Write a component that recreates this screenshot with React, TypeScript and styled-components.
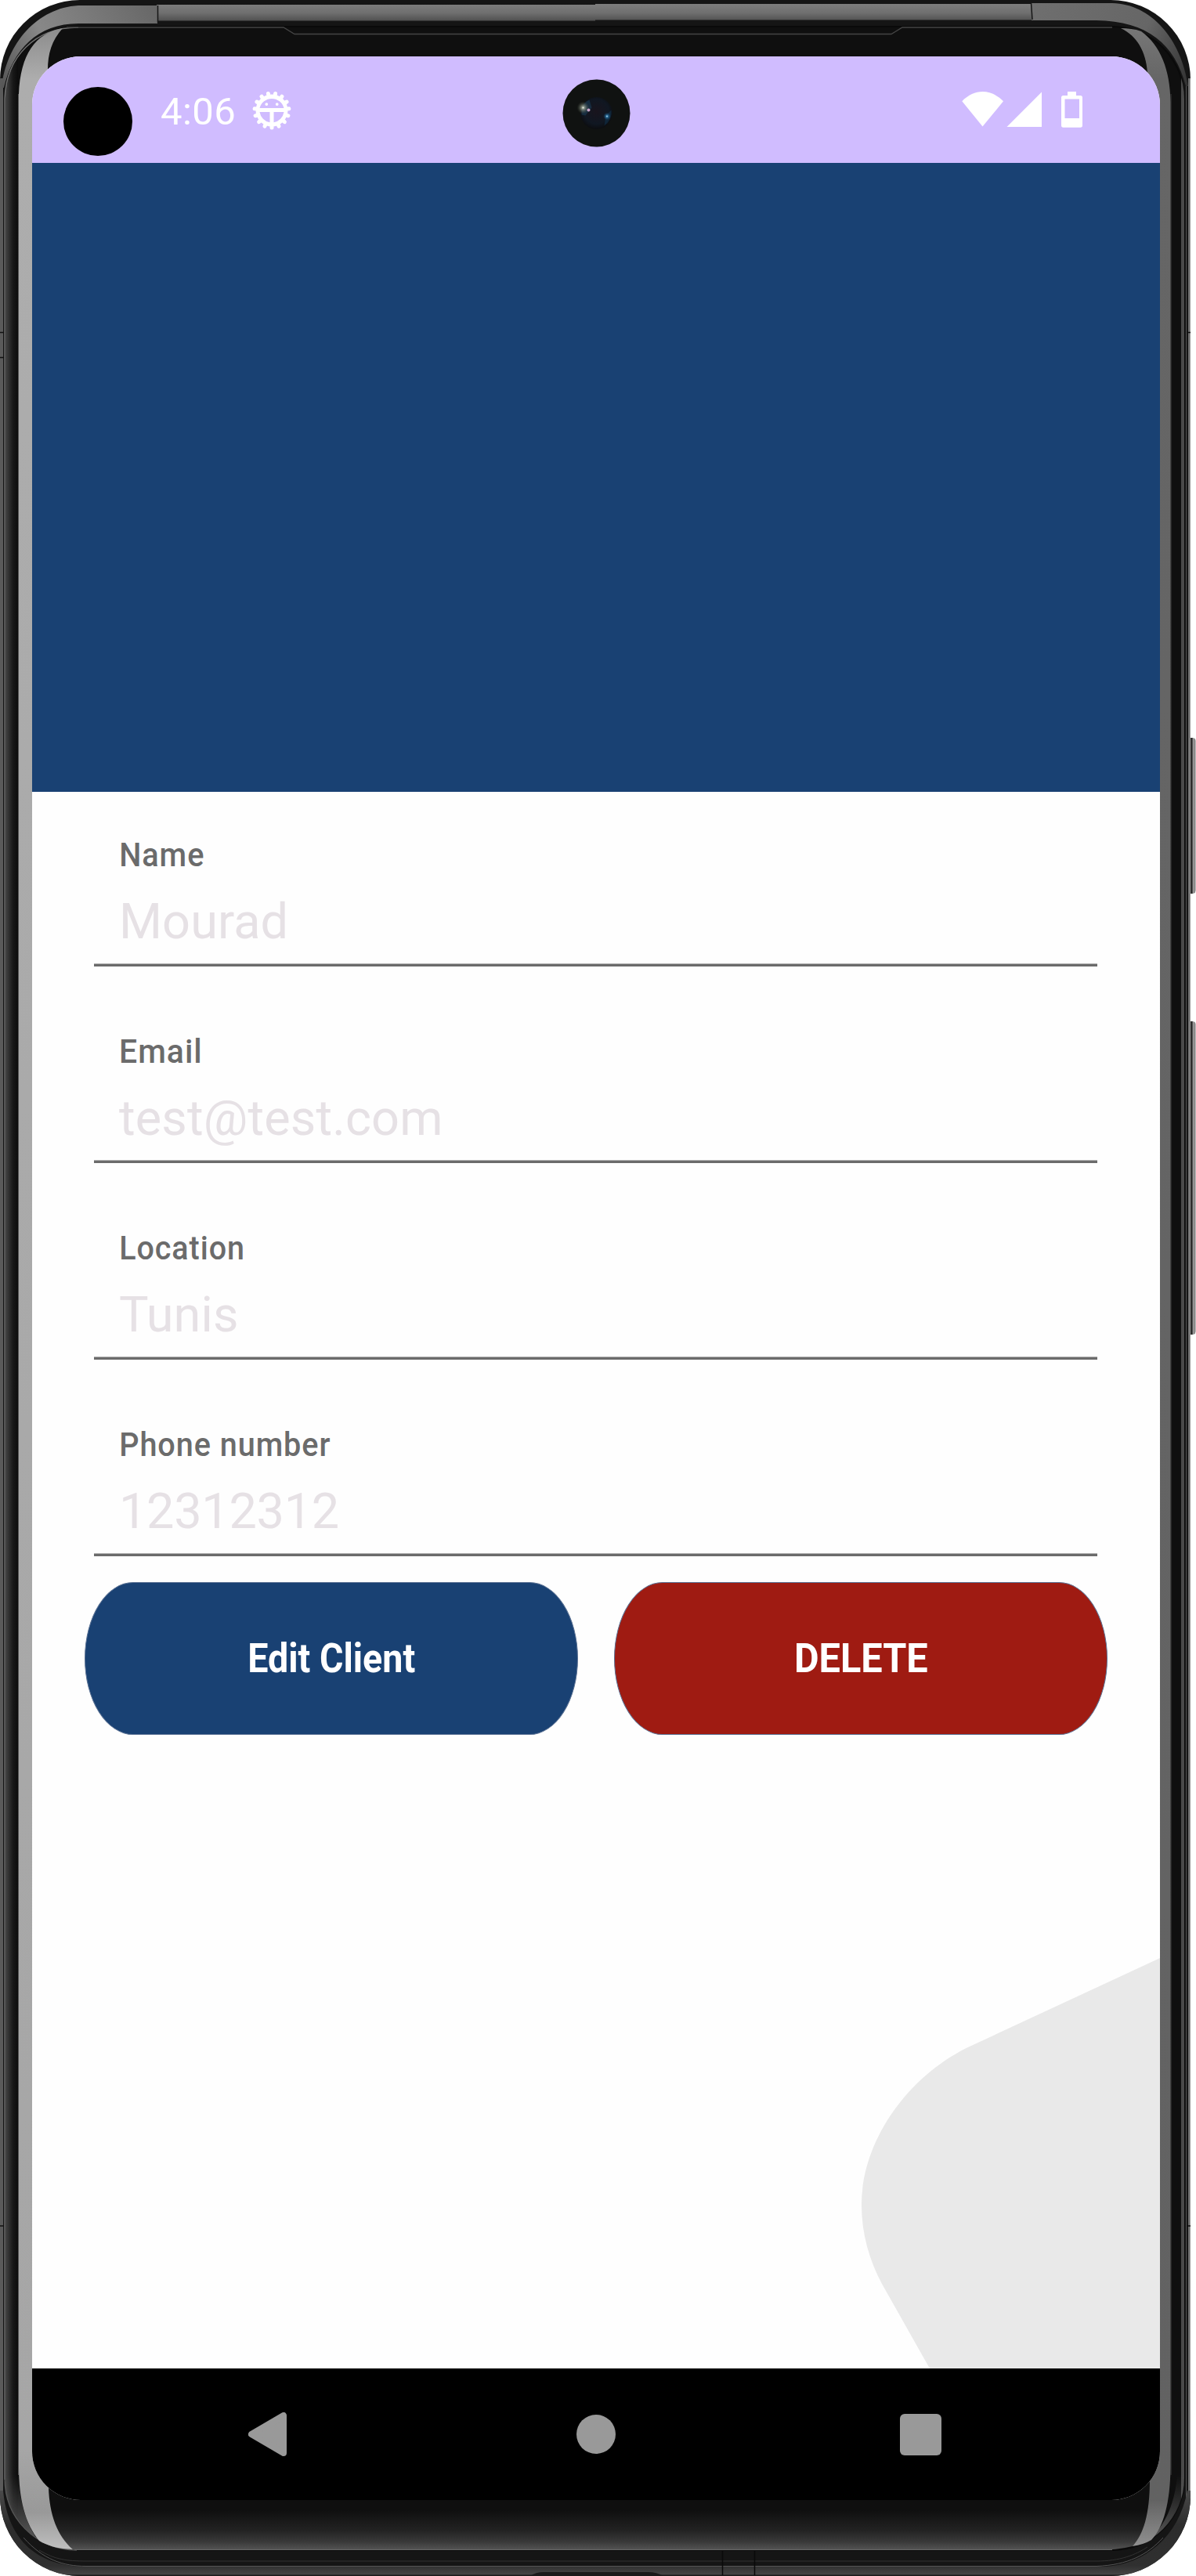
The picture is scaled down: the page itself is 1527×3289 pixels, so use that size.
import React from "react";
import styled, { createGlobalStyle } from "styled-components";

const GlobalStyle = createGlobalStyle`
  *, *::before, *::after { box-sizing: border-box; }
  html, body { margin: 0; padding: 0; background: #fff; }
  body { font-family: Roboto, "Liberation Sans", sans-serif; }
`;

const Device = styled.div`
  position: relative;
  width: 1527px;
  height: 3289px;
  padding: 72px 46px 97px 41px;
  overflow: hidden;
`;

const FrameArt = styled.svg`
  position: absolute;
  inset: 0;
  display: block;
`;

const Screen = styled.main`
  position: relative;
  display: flex;
  flex-direction: column;
  width: 1440px;
  height: 3120px;
  border-radius: 62px;
  overflow: hidden;
  background: #fefefe;
`;

const StatusBar = styled.header`
  display: flex;
  align-items: center;
  flex: none;
  height: 136px;
  padding: 0 98px 0 40px;
  background: #d0bcff;
`;

const Cutout = styled.div`
  width: 88px;
  height: 88px;
  margin-top: 30px;
  border-radius: 50%;
  background: #000;
`;

const Clock = styled.span`
  margin: 5px 0 0 36px;
  width: 96px;
  font-size: 49px;
  line-height: 58px;
  letter-spacing: 0.4px;
  color: #fff;
  white-space: nowrap;
`;

const DebugIcon = styled.svg`
  width: 50px;
  height: 50px;
  margin: 1px 0 0 20.5px;
`;

const SignalIcons = styled.svg`
  margin-left: auto;
  width: 155px;
  height: 48px;
`;

const Camera = styled.svg`
  position: absolute;
  left: 677px;
  top: 29px;
  width: 87px;
  height: 87px;
`;

const Banner = styled.section`
  flex: none;
  height: 803px;
  background: #194173;
`;

const Body = styled.section`
  position: relative;
  flex: 1;
`;

const Blob = styled.svg`
  position: absolute;
  right: 0;
  bottom: 0;
  width: 381px;
  height: 524px;
`;

const Form = styled.form`
  display: flex;
  flex-direction: column;
`;

const Field = styled.div`
  display: flex;
  flex-direction: column;
  height: 251px;
  padding: 56px 80px 0 79px;
`;

const Label = styled.span<{ $squeeze: number }>`
  align-self: flex-start;
  margin-left: 32px;
  font-size: 42px;
  line-height: 50px;
  font-weight: 500;
  color: #6b6b6b;
  letter-spacing: 1px;
  white-space: nowrap;
  transform: scaleX(${(p) => p.$squeeze});
  transform-origin: 3px 0;
`;

const Value = styled.span<{ $spacing: number }>`
  margin: 23px 0 16px 32px;
  font-size: 63px;
  line-height: 74px;
  letter-spacing: ${(p) => p.$spacing}px;
  color: #e6e1e5;
  white-space: nowrap;
`;

const Underline = styled.div`
  flex: none;
  height: 4px;
  background: linear-gradient(#b2b2b2 1px, #6b6b6b 1px);
`;

const Actions = styled.div`
  display: flex;
  gap: 46px;
  padding: 5px 67px 0;
`;

const ActionButton = styled.button<{ $color: string }>`
  flex: 1;
  height: 195px;
  padding: 0;
  border: 1px solid #5a7193;
  border-radius: 62px / 97.5px;
  background: ${(p) => p.$color};
  color: #fff;
  font-family: inherit;
  font-size: 51.5px;
  font-weight: 700;
`;

const ActionText = styled.span<{ $squeeze: number }>`
  display: inline-block;
  transform: scaleX(${(p) => p.$squeeze});
`;

const NavBar = styled.nav`
  display: flex;
  align-items: center;
  flex: none;
  height: 168px;
  padding-left: 276px;
  background: #000;
`;

const BackIcon = styled.svg`
  width: 49px;
  height: 56px;
`;

const HomeIcon = styled.div`
  width: 50px;
  height: 50px;
  margin-left: 370px;
  border-radius: 50%;
  background: #999;
`;

const RecentIcon = styled.div`
  width: 53px;
  height: 53px;
  margin-left: 363px;
  border-radius: 6px;
  background: #999;
`;

const fields = [
  { label: "Name", value: "Mourad", squeeze: 0.945, spacing: 0.1 },
  { label: "Email", value: "test@test.com", squeeze: 0.975, spacing: 0.15 },
  { label: "Location", value: "Tunis", squeeze: 0.94, spacing: 0.1 },
  { label: "Phone number", value: "12312312", squeeze: 0.943, spacing: -0.3 },
];

const teeth = Array.from({ length: 15 }, (_, i) => i * 24);

function PhoneFrame() {
  return (
    <FrameArt width="1527" height="3289" viewBox="0 0 1527 3289" fill="none">
      <defs>
        <clipPath id="body">
          <rect x="0" y="0" width="1520" height="3289" rx="102" />
        </clipPath>
        <clipPath id="glass">
          <rect x="6" y="34" width="1506" height="3222" rx="92" />
        </clipPath>
        <linearGradient id="topMetal" x1="0" y1="6" x2="0" y2="27" gradientUnits="userSpaceOnUse">
          <stop stopColor="#7c7c7c" />
          <stop offset="0.5" stopColor="#6f6f6f" />
          <stop offset="1" stopColor="#4f4f4f" />
        </linearGradient>
        <linearGradient id="cornerL" x1="0" y1="110" x2="200" y2="0" gradientUnits="userSpaceOnUse">
          <stop stopColor="#555" />
          <stop offset="0.35" stopColor="#888" />
          <stop offset="1" stopColor="#666" />
        </linearGradient>
        <linearGradient id="cornerR" x1="1520" y1="100" x2="1317" y2="0" gradientUnits="userSpaceOnUse">
          <stop stopColor="#333" />
          <stop offset="0.35" stopColor="#666" />
          <stop offset="1" stopColor="#6f6f6f" />
        </linearGradient>
        <linearGradient id="sideL" x1="7" y1="0" x2="23" y2="0" gradientUnits="userSpaceOnUse">
          <stop stopColor="#444" />
          <stop offset="0.6" stopColor="#181818" />
          <stop offset="1" stopColor="#0c0c0c" />
        </linearGradient>
        <linearGradient id="stripL" x1="0" y1="36" x2="0" y2="3256" gradientUnits="userSpaceOnUse">
          <stop stopColor="#8c8c8c" />
          <stop offset="0.02" stopColor="#adadad" />
          <stop offset="0.96" stopColor="#a6a6a6" />
          <stop offset="0.985" stopColor="#999" />
          <stop offset="1" stopColor="#c0c0c0" />
        </linearGradient>
        <linearGradient id="stripR" x1="0" y1="36" x2="0" y2="3256" gradientUnits="userSpaceOnUse">
          <stop stopColor="#777" />
          <stop offset="0.02" stopColor="#666" />
          <stop offset="0.98" stopColor="#626262" />
          <stop offset="1" stopColor="#949494" />
        </linearGradient>
        <linearGradient id="chin" x1="0" y1="3205" x2="0" y2="3256" gradientUnits="userSpaceOnUse">
          <stop stopColor="#0f0f0f" />
          <stop offset="0.5" stopColor="#222" />
          <stop offset="0.8" stopColor="#3a3a3a" />
          <stop offset="1" stopColor="#555" />
        </linearGradient>
        <linearGradient id="glare" x1="0" y1="3160" x2="0" y2="3250" gradientUnits="userSpaceOnUse">
          <stop stopColor="#666" stopOpacity="0" />
          <stop offset="1" stopColor="#777" stopOpacity="0.8" />
        </linearGradient>
        <linearGradient id="bottomMetal" x1="0" y1="3180" x2="0" y2="3289" gradientUnits="userSpaceOnUse">
          <stop stopColor="#4a4a4a" />
          <stop offset="0.4" stopColor="#2c2c2c" />
          <stop offset="0.88" stopColor="#303030" />
          <stop offset="0.98" stopColor="#444" />
          <stop offset="0.99" stopColor="#1b1b1b" />
        </linearGradient>
        <linearGradient id="keyFace" x1="1518" y1="0" x2="1527" y2="0" gradientUnits="userSpaceOnUse">
          <stop stopColor="#222" />
          <stop offset="0.45" stopColor="#303030" />
          <stop offset="0.6" stopColor="#999" />
          <stop offset="1" stopColor="#777" />
        </linearGradient>
      </defs>

      {/* side keys */}
      <rect x="1516" y="942" width="10.500" height="199" rx="4" fill="url(#keyFace)" />
      <rect x="1516" y="1304" width="10.500" height="400" rx="4" fill="url(#keyFace)" />

      <g clipPath="url(#body)">
        <rect width="1520" height="3289" fill="#151515" />

        {/* outer metal, sides */}
        <rect x="0" y="100" width="4" height="3090" fill="#5a5a5a" />
        <rect x="1514" y="100" width="1" height="3090" fill="#555" />
        <rect x="1517" y="100" width="2" height="3090" fill="#6e6e6e" />
        <rect x="1519" y="100" width="1" height="3090" fill="#999" />
        <path d="M0 424.500H5M0 456.500H5M0 2842H5M1515 424.500H1520M1515 2842H1520" stroke="#111" strokeWidth="1.500" />

        {/* outer metal, top */}
        <rect x="200" y="6" width="560" height="20.500" fill="url(#topMetal)" />
        <rect x="760" y="5" width="560" height="20.500" fill="url(#topMetal)" />
        <path d="M201 7H100C48 10 8 55 2 112L5 112C16 64 48 30 100 30H201Z" fill="url(#cornerL)" />
        <path d="M1317 4H1420C1470 5 1508 50 1517 110L1514 110C1500 56 1465 27 1400 26H1317Z" fill="url(#cornerR)" />
        <path d="M201.500 7V29M1316.500 4L1318 25" stroke="#151515" strokeWidth="1.500" />

        {/* outer metal, bottom */}
        <path d="M4 3180C10 3245 50 3277 110 3277H1410C1460 3275 1505 3240 1516 3180H1520V3289H0V3180Z" fill="url(#bottomMetal)" />
        <path d="M30 3240C55 3268 80 3276.500 110 3276.500H1400C1440 3275 1465 3262 1485 3240" stroke="#555" />
        <path d="M50 3256C70 3268 85 3270 110 3270H1400C1430 3270 1450 3262 1465 3252" stroke="#333" />
        <path d="M677 3289Q684 3284 694 3284H828Q838 3284 847 3289Z" fill="#1a1a1a" />

        {/* glass edge */}
        <rect x="6" y="34" width="1506" height="3222" rx="92" fill="#0f0f0f" stroke="#0a0a0a" strokeWidth="2" />
        <g clipPath="url(#glass)">
          <rect x="7" y="60" width="16" height="3190" fill="url(#sideL)" />
          <rect x="1508" y="60" width="4" height="3190" fill="#4a4a4a" />
          <path d="M7 3160H23C26 3200 36 3232 55 3250H7Z" fill="url(#glare)" />
          <path d="M1512 3160H1503C1500 3200 1485 3230 1460 3249H1512Z" fill="url(#glare)" />
        </g>
        <path d="M6 3166V126C8 72 45 35 100 35" stroke="#707070" strokeWidth="1.500" />
        <path d="M6 3164C6 3215 45 3255 98 3256" stroke="#555" strokeWidth="1.500" />
        <rect x="23" y="120" width="1.200" height="3040" fill="#555" />
        <rect x="1494.500" y="120" width="1.200" height="3040" fill="#333" />

        {/* chin highlight */}
        <path d="M62 3192H1468C1466 3215 1460 3240 1446 3251Q1425 3256 1400 3256H110L93 3255C72 3238 64 3215 62 3192Z" fill="url(#chin)" />
        <path d="M95 3255.500H1420" stroke="#666" />
        <path d="M922.500 3257V3288M963.500 3257V3288" stroke="#0a0a0a" strokeWidth="1.500" />

        {/* glass reflections */}
        <path d="M24 120C26 70 45 42 80 36C66 52 61 68 61 90L61 160L50 160V3120H62V3176C63 3210 73 3238 93 3255C72 3254 60 3250 50 3244C32 3222 24 3190 24 3150Z" fill="url(#stripL)" />
        <path d="M1431 36C1440 36 1449 37 1457 40C1482 58 1494 90 1494.500 130V3150C1494 3195 1486 3226 1470 3243Q1460 3249 1446 3251C1460 3236 1468 3210 1468 3166V3100H1475V160H1465V92C1463 66 1452 46 1431 36Z" fill="url(#stripR)" />

        {/* earpiece seam */}
        <path d="M85 35H362L376 43.500H1138L1152 35H1420" stroke="#444" strokeWidth="1.300" />
      </g>
    </FrameArt>
  );
}

export default function App() {
  return (
    <>
      <GlobalStyle />
      <Device>
        <PhoneFrame />
        <Screen>
          <StatusBar>
            <Cutout />
            <Clock>4:06</Clock>
            <DebugIcon viewBox="-25 -25 50 50">
              <g stroke="#fff" strokeWidth="5" strokeLinecap="round">
                {teeth.map((a) => (
                  <line key={a} x1="0" y1="18" x2="0" y2="22" transform={`rotate(${a})`} />
                ))}
              </g>
              <circle r="20.500" fill="#fff" />
              <path d="M-15.500 -3A16 16 0 0 1 15.500 -3ZM-15.500 2H-2.500V15.300A16 16 0 0 1 -15.500 2ZM15.500 2H2.500V15.300A16 16 0 0 0 15.500 2Z" fill="#d0bcff" />
              <circle cx="-6.700" cy="-7.900" r="1.900" fill="#fff" />
              <circle cx="6.700" cy="-7.900" r="1.900" fill="#fff" />
            </DebugIcon>
            <SignalIcons viewBox="1229 116 155 48">
              <path
                d="M1229.300 129.300C1245 113 1266 113 1282 129.300L1255.500 161.500Z"
                fill="#fff"
              />
              <path d="M1331 117.500V162H1286.500Z" fill="#fff" />
              <path
                fillRule="evenodd"
                d="M1364 117H1375V122H1380.500Q1383 122 1383 124.500V160Q1383 162.700 1380.500 162.700H1358.500Q1356 162.700 1356 160V124.500Q1356 122 1358.500 122H1364ZM1360.500 126.500V151H1379V126.500Z"
                fill="#fff"
              />
            </SignalIcons>
          </StatusBar>
          <Camera viewBox="-43.500 -43.500 87 87">
            <defs>
              <radialGradient id="lens" cx="0.5" cy="0.45" r="0.55">
                <stop stopColor="#19141d" />
                <stop offset="0.7" stopColor="#101722" />
                <stop offset="1" stopColor="#0c0d10" />
              </radialGradient>
              <radialGradient id="glowWarm">
                <stop stopColor="#f2f5e8" />
                <stop offset="0.25" stopColor="#9aa393" stopOpacity="0.8" />
                <stop offset="1" stopColor="#40483c" stopOpacity="0" />
              </radialGradient>
              <radialGradient id="glowBlue">
                <stop stopColor="#d6f2ff" />
                <stop offset="0.3" stopColor="#2f7db0" stopOpacity="0.8" />
                <stop offset="1" stopColor="#12395c" stopOpacity="0" />
              </radialGradient>
            </defs>
            <circle r="43" fill="#101211" />
            <circle r="20.500" fill="url(#lens)" />
            <path d="M-19 -7A20 20 0 0 1 -9 -17L-6 -7L-14 3L-19 2Z" fill="#1d4766" opacity="0.45" />
            <path d="M19 -4A20 20 0 0 1 10 16L12 3Z" fill="#124064" opacity="0.4" />
            <circle cx="-17" cy="-7" r="8" fill="url(#glowWarm)" />
            <circle cx="-10" cy="-4" r="2" fill="#c9a4c9" />
            <circle cx="13.500" cy="4" r="5" fill="url(#glowBlue)" />
          </Camera>
          <Banner />
          <Body>
            <Blob viewBox="1100 2500 381 524">
              <path
                d="M1481 2500L1240 2612C1160 2649 1100 2733 1100 2815C1100 2852 1110 2886 1126 2916L1187 3024H1481Z"
                fill="#e9e9e9"
              />
            </Blob>
            <Form>
              {fields.map((f) => (
                <Field key={f.label}>
                  <Label $squeeze={f.squeeze}>{f.label}</Label>
                  <Value $spacing={f.spacing}>{f.value}</Value>
                  <Underline />
                </Field>
              ))}
              <Actions>
                <ActionButton type="button" $color="#194173">
                  <ActionText $squeeze={0.905}>Edit Client</ActionText>
                </ActionButton>
                <ActionButton type="button" $color="#9f1b12">
                  <ActionText $squeeze={0.945}>DELETE</ActionText>
                </ActionButton>
              </Actions>
            </Form>
          </Body>
          <NavBar>
            <BackIcon viewBox="0 0 49 56">
              <path
                d="M4 28L45 4V52Z"
                fill="#999"
                stroke="#999"
                strokeWidth="8"
                strokeLinejoin="round"
              />
            </BackIcon>
            <HomeIcon />
            <RecentIcon />
          </NavBar>
        </Screen>
      </Device>
    </>
  );
}
